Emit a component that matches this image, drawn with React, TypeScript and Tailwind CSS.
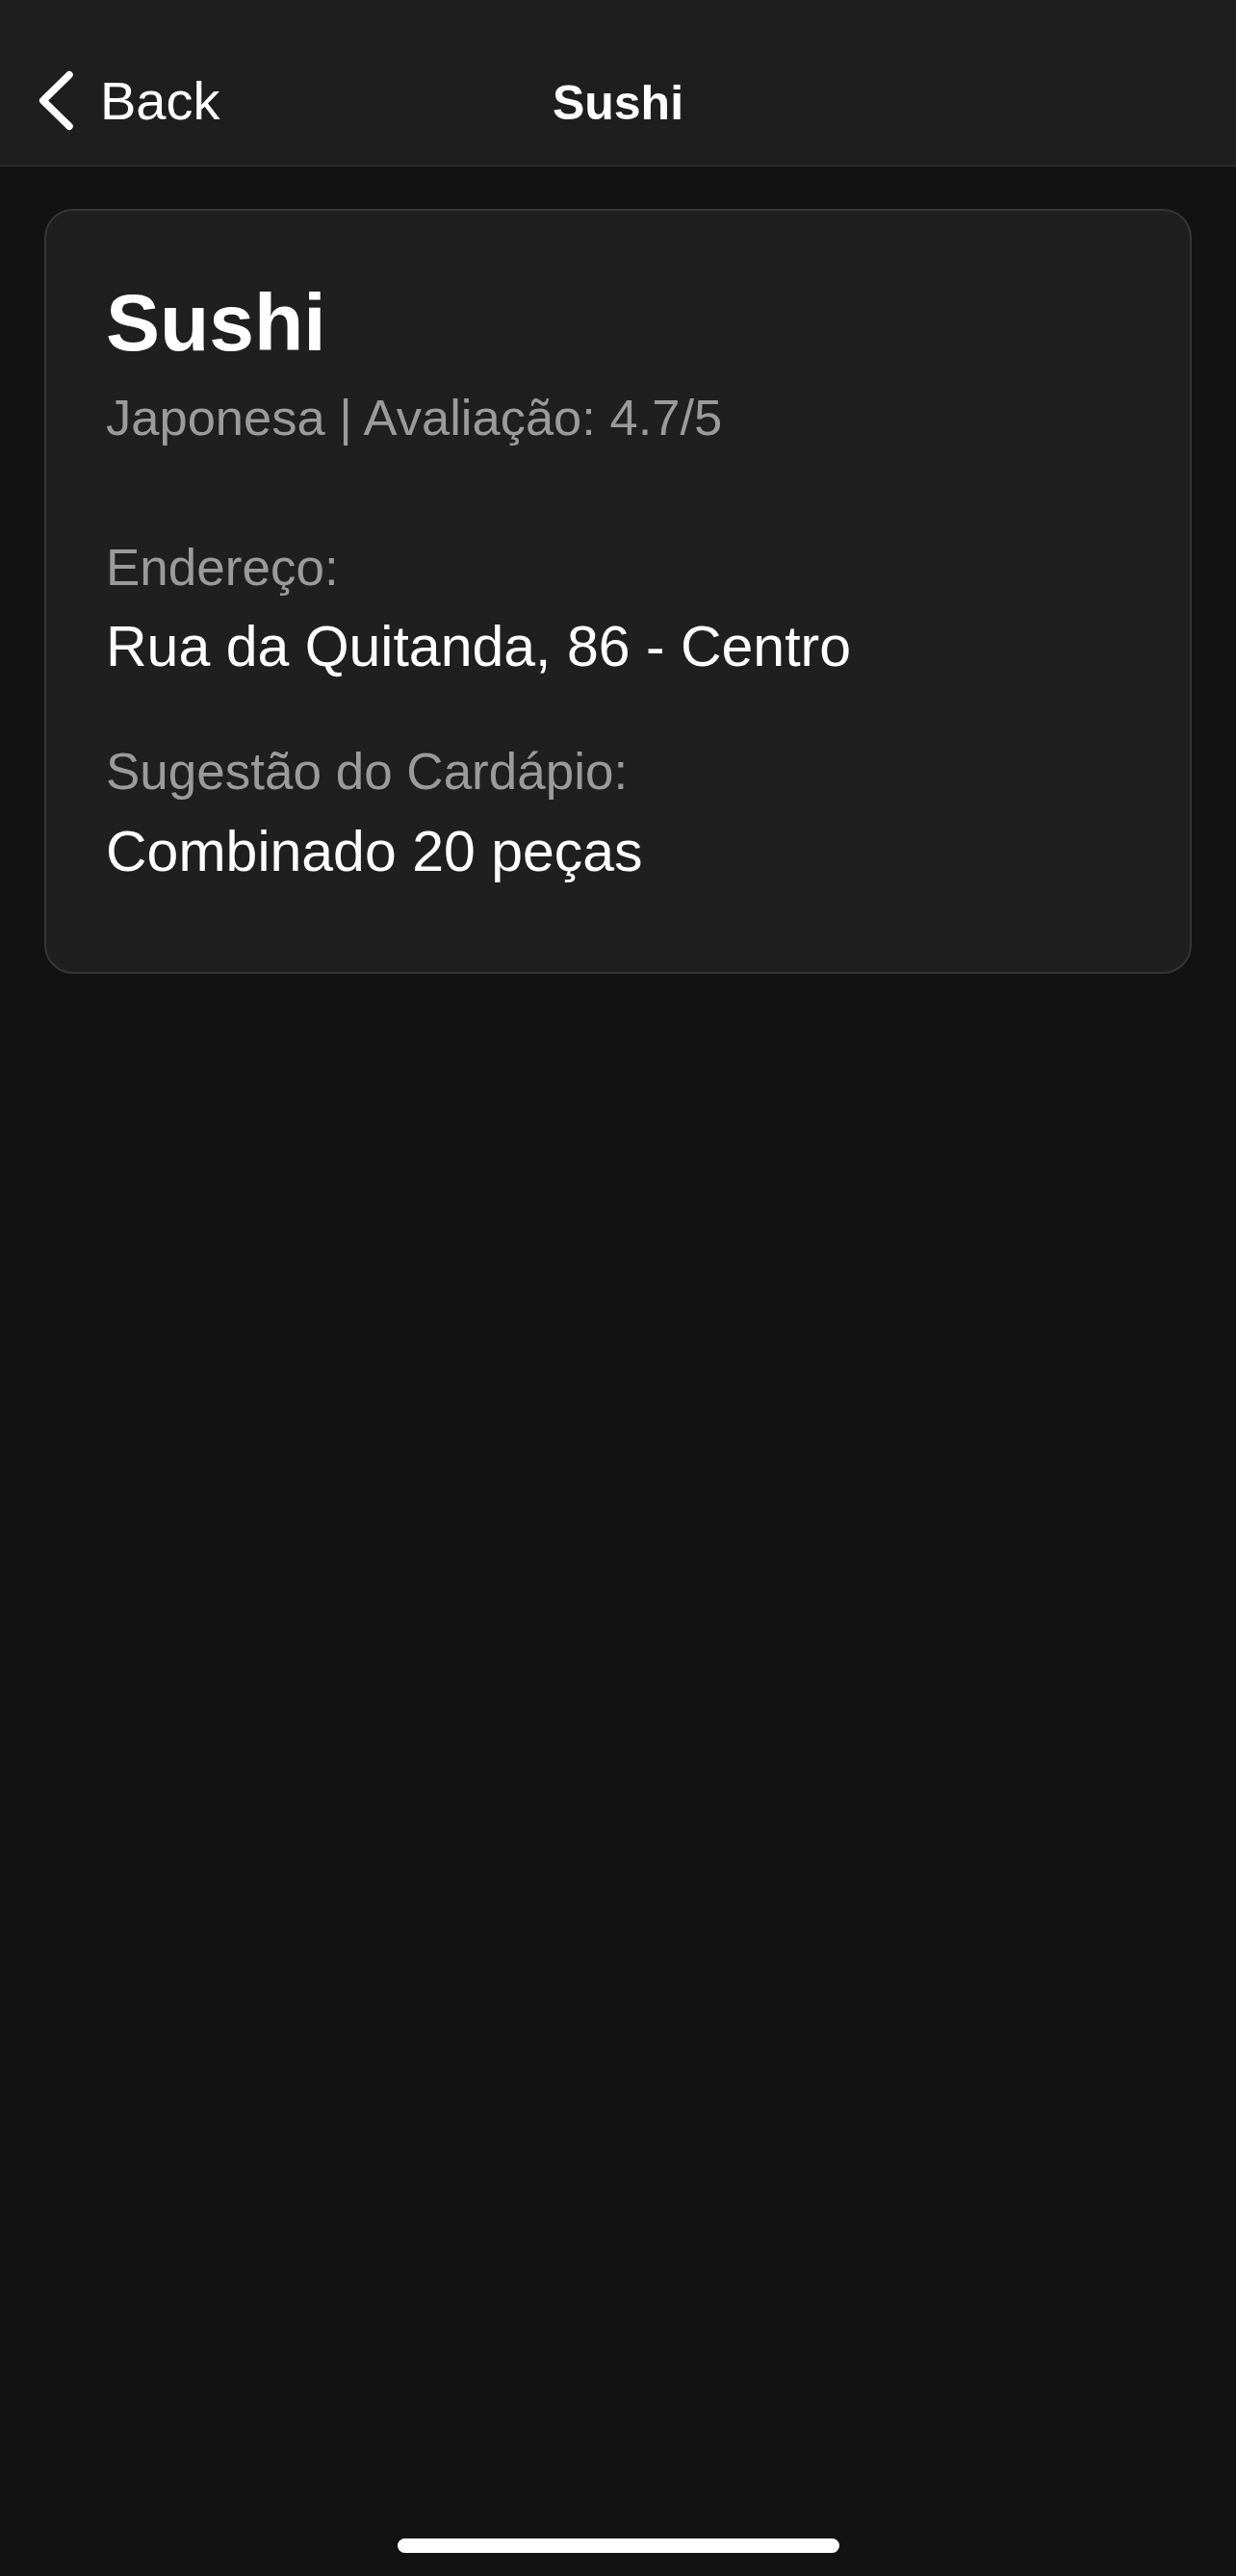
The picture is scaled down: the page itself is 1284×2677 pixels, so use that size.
const restaurant = {
	name: 'Sushi',
	cuisine: 'Japonesa',
	rating: '4.7/5',
	address: 'Rua da Quitanda, 86 - Centro',
	suggestion: 'Combinado 20 peças',
};

const ChevronLeft = () => (
	<svg width="36" height="63" viewBox="0 0 36 63" fill="none">
		<polyline
			points="32,4.7 4.7,31.5 32,58.3"
			stroke="white"
			strokeWidth="7.5"
			strokeLinecap="round"
			strokeLinejoin="round"
		/>
	</svg>
);

const Header = ({ title }: { title: string }) => {
	return (
		<div className="h-[173px] bg-[#1e1e1e] border-b border-[#363636] grid grid-cols-[1fr_auto_1fr] items-start">
			<div className="flex flex-row items-center pl-[40px] pt-[73px]">
				<ChevronLeft />
				<span className="ml-[28px] text-[56px] leading-none text-white">
					Back
				</span>
			</div>
			<div className="pt-[82px] text-[50px] leading-none font-bold text-white">
				{title}
			</div>
			<div />
		</div>
	);
};

const App = () => {
	return (
		<div
			className="min-h-[2677px] flex flex-col bg-[#121212]"
			style={{ fontFamily: '"Liberation Sans", Arial, sans-serif' }}
		>
			<Header title={restaurant.name} />
			<div className="flex-1 px-[46px] pt-[44px]">
				<div className="rounded-[30px] border-2 border-[#363636] bg-[#1f1f1f] pl-[62px] pr-[62px] pt-[74px] pb-[95px]">
					<h1 className="text-[84px] leading-none font-bold text-white">
						{restaurant.name}
					</h1>
					<p className="mt-[31px] text-[52.5px] leading-none text-[#9b9b9b]">
						{restaurant.cuisine} | Avaliação: {restaurant.rating}
					</p>
					<p className="mt-[102px] text-[53px] leading-none text-[#9b9b9b]">
						Endereço:
					</p>
					<p className="mt-[27px] text-[59px] leading-none text-white">
						{restaurant.address}
					</p>
					<p className="mt-[73px] text-[53px] leading-none text-[#9b9b9b]">
						Sugestão do Cardápio:
					</p>
					<p className="mt-[28px] text-[59px] leading-none text-white">
						{restaurant.suggestion}
					</p>
				</div>
			</div>
			<div className="flex justify-center pb-[24px]">
				<div className="w-[459px] h-[15px] rounded-full bg-white" />
			</div>
		</div>
	);
};

export default App;
